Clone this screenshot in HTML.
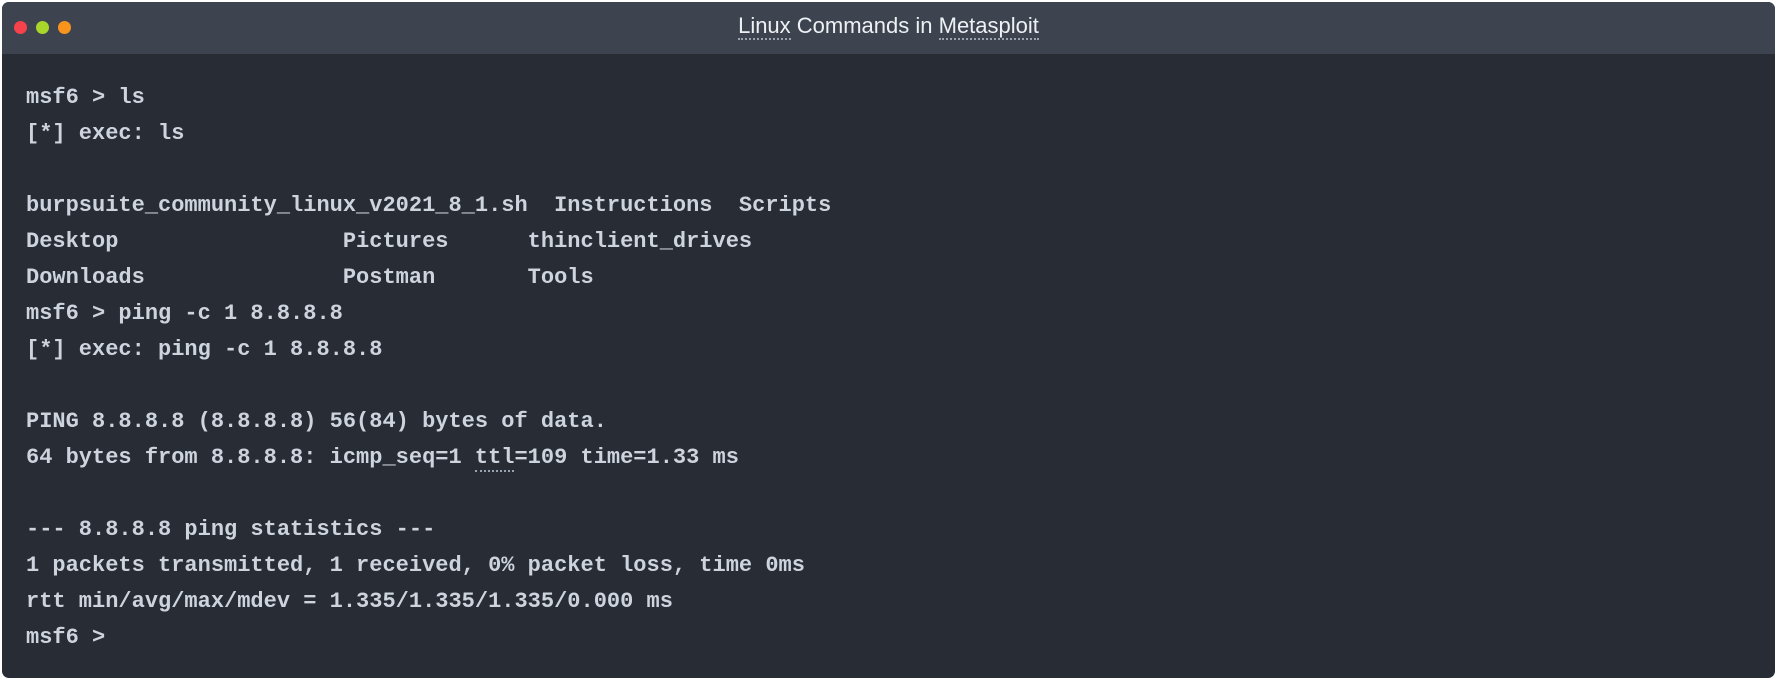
<!DOCTYPE html>
<html><head><meta charset="utf-8"><style>
html,body{margin:0;padding:0;background:#fff;width:1780px;height:681px;overflow:hidden}
.win{position:absolute;left:2px;top:2px;width:1773px;height:676px;background:#282c34;border-radius:7px;overflow:hidden}
.hdr{position:absolute;left:0;top:0;width:100%;height:52px;background:#3d4450}
.dot{position:absolute;top:19px;width:13px;height:13px;border-radius:50%}
.title{position:absolute;left:0;right:0;top:11px;text-align:center;font-family:"Liberation Sans",sans-serif;font-size:22px;color:#eef1f4}
.u{border-bottom:2px dotted #9aa3ae}
pre{position:absolute;left:24px;top:78px;margin:0;font-family:"Liberation Mono","DejaVu Sans Mono",monospace;font-weight:bold;font-size:22px;line-height:36px;color:#cdd4dd}
.t{border-bottom:2px dotted #9aa3ae}
</style></head><body>
<div class="win">
<div class="hdr">
<div class="dot" style="left:12px;background:#f5424b"></div>
<div class="dot" style="left:34px;background:#a9d62a"></div>
<div class="dot" style="left:56px;background:#f8941e"></div>
<div class="title"><span class="u">Linux</span> Commands in <span class="u">Metasploit</span></div>
</div>
<pre>msf6 &gt; ls
[*] exec: ls

burpsuite_community_linux_v2021_8_1.sh  Instructions  Scripts
Desktop                 Pictures      thinclient_drives
Downloads               Postman       Tools
msf6 &gt; ping -c 1 8.8.8.8
[*] exec: ping -c 1 8.8.8.8

PING 8.8.8.8 (8.8.8.8) 56(84) bytes of data.
64 bytes from 8.8.8.8: icmp_seq=1 <span class="t">ttl</span>=109 time=1.33 ms

--- 8.8.8.8 ping statistics ---
1 packets transmitted, 1 received, 0% packet loss, time 0ms
rtt min/avg/max/mdev = 1.335/1.335/1.335/0.000 ms
msf6 &gt; </pre>
</div>
</body></html>
